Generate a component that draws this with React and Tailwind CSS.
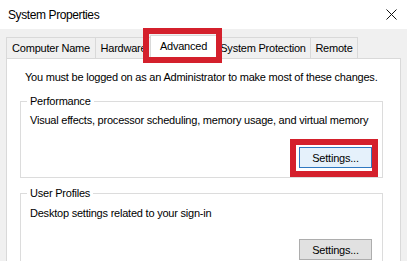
export default function App() {
  const font = { fontFamily: '"Liberation Sans", Arial, sans-serif' };
  return (
    <div className="relative w-[407px] h-[261px] overflow-hidden bg-white flex flex-col text-[11px] leading-[16px] tracking-[-0.22px] text-black whitespace-nowrap" style={font}>
      <div className="h-[29px] shrink-0 flex items-center justify-between pl-[8px] pr-[10px]">
        <span className="text-[12px] tracking-[-0.4px]">System Properties</span>
        <svg width="11" height="11" viewBox="0 0 11 11" className="block">
          <path d="M0.5 0.5 L10.5 10.5 M10.5 0.5 L0.5 10.5" stroke="#111" strokeWidth="1" fill="none" />
        </svg>
      </div>
      <div className="flex-1 bg-[#f0f0f0] px-[6px] flex flex-col">
        <div className="h-[29px] shrink-0 flex items-end">
          <div className="w-[90px] h-[21px] border border-b-0 border-[#d9d9d9] bg-[#f0f0f0] flex justify-center pt-[2px]">Computer Name</div>
          <div className="-ml-px w-[57px] h-[21px] border border-b-0 border-[#d9d9d9] bg-[#f0f0f0] flex justify-center pt-[2px]">Hardware</div>
          <div className="-ml-[2px] w-[67px] h-[24px] -mb-px relative z-10 border border-b-0 border-[#d9d9d9] bg-white flex justify-center pt-[2px]">Advanced</div>
          <div className="-ml-[2px] w-[96px] h-[21px] border border-b-0 border-[#d9d9d9] bg-[#f0f0f0] flex justify-center pt-[2px]">System Protection</div>
          <div className="-ml-px w-[48px] h-[21px] border border-b-0 border-[#d9d9d9] bg-[#f0f0f0] flex justify-center pt-[2px]">Remote</div>
        </div>
        <div className="flex-1 min-w-0 bg-white border border-b-0 border-[#d9d9d9] pt-[10px] pl-[13px] pr-[17px]">
          <p className="ml-[5px]">You must be logged on as an Administrator to make most of these changes.</p>
          <fieldset className="mt-[8px] border border-[#dcdcdc] p-0 min-w-0">
            <legend className="ml-[6px] px-[3px]">Performance</legend>
            <div className="pl-[9px] pr-[10px] pb-[9px] flex flex-col">
              <p className="mt-[3px]">Visual effects, processor scheduling, memory usage, and virtual memory</p>
              <div className="mt-[19px] flex justify-end">
                <button className="w-[73px] h-[21px] border border-[#2f78c0] bg-[#e5f1fb] flex items-center justify-center">Settings...</button>
              </div>
            </div>
          </fieldset>
          <fieldset className="mt-[7px] border border-[#dcdcdc] p-0 min-w-0">
            <legend className="ml-[6px] px-[3px]">User Profiles</legend>
            <div className="pl-[9px] pr-[10px] pb-[9px] flex flex-col">
              <p className="mt-[4px]">Desktop settings related to your sign-in</p>
              <div className="mt-[18px] flex justify-end">
                <button className="w-[73px] h-[21px] border border-[#adadad] bg-[#e1e1e1] flex items-center justify-center">Settings...</button>
              </div>
            </div>
          </fieldset>
        </div>
      </div>
      <div className="absolute left-[143px] top-[28px] w-[79px] h-[35px] border-[6px] border-[#d4202c] pointer-events-none z-20" />
      <div className="absolute left-[290px] top-[139px] w-[88px] h-[38px] border-[6px] border-[#d4202c] pointer-events-none z-20" />
    </div>
  );
}
